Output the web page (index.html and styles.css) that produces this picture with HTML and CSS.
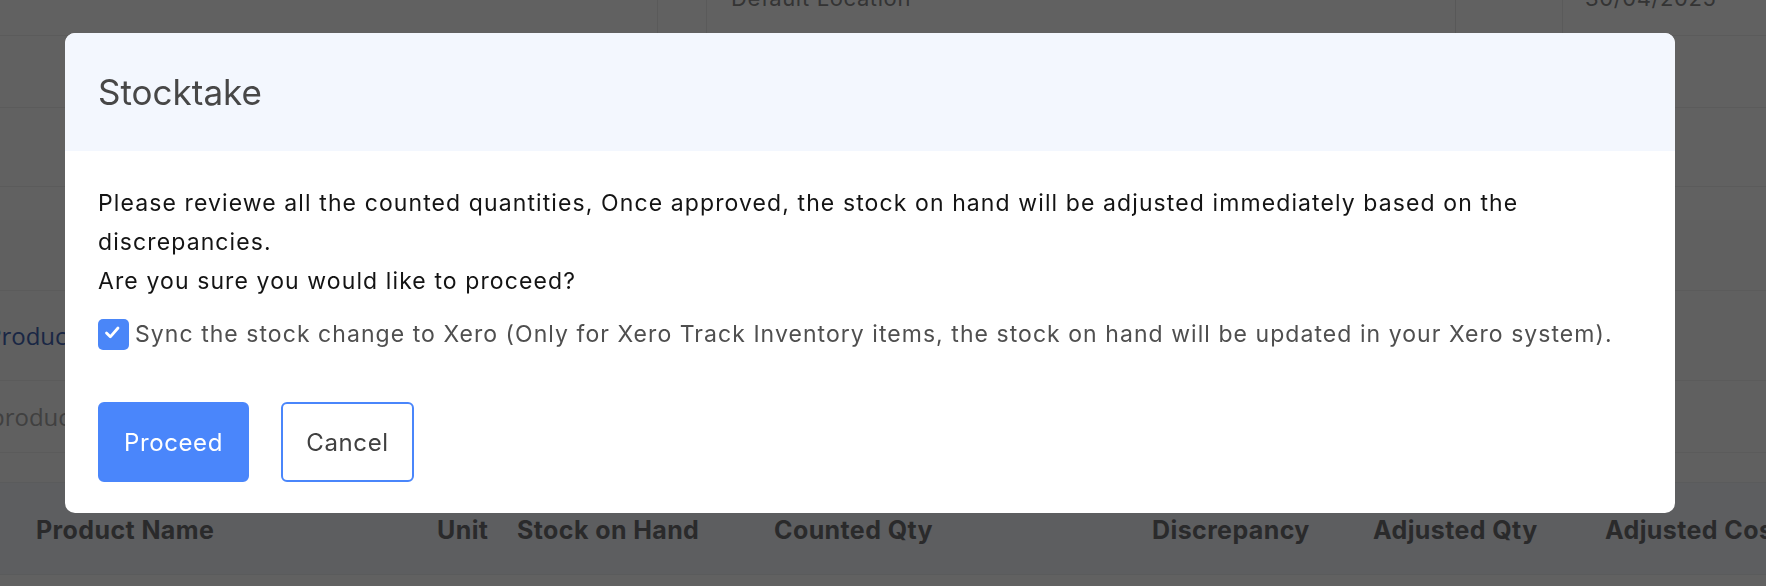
FILE: index.html
```html
<!DOCTYPE html>
<html lang="en">
<head>
<meta charset="utf-8">
<title>Stocktake</title>
<link rel="stylesheet" href="styles.css">
</head>
<body>
<div class="page">
  <div class="row row-top">
    <div class="cell c1"></div>
    <div class="cell c2"></div>
    <div class="cell c3"><span class="loc">Default Location</span></div>
    <div class="cell c4"></div>
    <div class="cell c5"></div>
    <div class="cell c6"><span class="date">30/04/2025</span></div>
  </div>
  <div class="row row-a"></div>
  <div class="row row-b"></div>
  <div class="row row-c"></div>
  <div class="section">
    <div class="row row-d"></div>
    <div class="row row-link"><span class="link">Products</span></div>
    <div class="row row-input"><span class="placeholder">products</span></div>
    <div class="row row-e"></div>
  </div>
  <div class="thead">
    <div class="th">Product Name</div>
    <div class="th">Unit</div>
    <div class="th">Stock on Hand</div>
    <div class="th">Counted Qty</div>
    <div class="th">Discrepancy</div>
    <div class="th">Adjusted Qty</div>
    <div class="th">Adjusted Cost</div>
  </div>
  <div class="row row-f"></div>
</div>

<div class="overlay">
  <div class="modal">
    <div class="modal-header">
      <h2 class="modal-title">Stocktake</h2>
    </div>
    <div class="modal-body">
      <p class="msg">Please reviewe all the counted quantities, Once approved, the stock on hand will be adjusted immediately based on the discrepancies.<br>Are you sure you would like to proceed?</p>
      <label class="sync">
        <span class="checkbox">
          <svg width="17" height="15" viewBox="0 0 17 15"><path d="M2.5 8 L6.3 11.8 L14 3" fill="none" stroke="#fff" stroke-width="2.8" stroke-linecap="round" stroke-linejoin="round"/></svg>
        </span>
        <span class="sync-text">Sync the stock change to Xero (Only for Xero Track Inventory items, the stock on hand will be updated in your Xero system).</span>
      </label>
      <div class="actions">
        <button class="btn btn-primary">Proceed</button>
        <button class="btn btn-outline">Cancel</button>
      </div>
    </div>
  </div>
</div>
</body>
</html>
```

FILE: styles.css
```css
* { box-sizing: border-box; }
html, body { margin: 0; padding: 0; }
body {
  width: 1766px;
  height: 586px;
  overflow: hidden;
  font-family: Inter, "Liberation Sans", Arial, sans-serif;
  background: #ffffff;
}

.page {
  display: flex;
  flex-direction: column;
  width: 1766px;
}
.row { border-bottom: 1px solid #f0f0f0; }
.row-top {
  height: 36px;
  display: flex;
  align-items: flex-end;
}
.cell { height: 100%; }
.c1 { width: 657px; }
.c2 { width: 49px; border-left: 1px solid #ececec; }
.c3 { width: 749px; border-left: 1px solid #ececec; padding-left: 24px; overflow: hidden; }
.c4 { width: 57px; border-left: 1px solid #e6e6e6; }
.c5 { width: 50px; }
.c6 { flex: 1; border-left: 1px solid #ececec; padding-left: 22px; overflow: hidden; }
.loc, .date {
  display: block;
  font-size: 22px;
  color: #8a8a8a;
  line-height: 22px;
  margin-top: -13px;
  letter-spacing: 0.6px;
}
.row-a { height: 72px; }
.row-b { height: 79px; }
.row-c { height: 33px; border-bottom: none; }
.section { background: #fcfcfc; display: flex; flex-direction: column; }
.row-d { height: 71px; }
.row-link {
  height: 90px;
  display: flex;
  align-items: center;
}
.link {
  margin-left: -13px;
  font-size: 24px;
  color: #4466b4;
  font-family: "Open Sans", Inter, sans-serif;
}
.row-input {
  height: 72px;
  display: flex;
  align-items: center;
}
.placeholder {
  margin-left: -10px;
  font-size: 24px;
  color: #a8a8a8;
  font-family: "Open Sans", Inter, sans-serif;
}
.row-e { height: 29px; border-bottom: none; }

.thead {
  height: 93px;
  background: #f3f6fc;
  border-top: 1px solid #eceef2;
  border-bottom: 1px solid #eceef2;
  display: grid;
  grid-template-columns: 401px 80px 257px 378px 221px 232px 1fr;
  padding-left: 36px;
  align-items: center;
}
.th {
  font-size: 25px;
  font-weight: 700;
  color: #6f7072;
  white-space: nowrap;
  overflow: hidden;
  letter-spacing: 0.4px;
  padding-top: 3px;
}
.row-f { height: 20px; }

.overlay {
  position: fixed;
  inset: 0;
  background: rgba(0, 0, 0, 0.62);
  padding: 33px 0 0 65px;
}

.modal {
  width: 1610px;
  background: #ffffff;
  border-radius: 10px;
  overflow: hidden;
}
.modal-header {
  height: 118px;
  background: #f3f7fe;
  display: flex;
  align-items: center;
  padding: 0 33px;
}
.modal-title {
  margin: 0;
  font-size: 35px;
  font-weight: 400;
  color: #474747;
}
.modal-body {
  padding: 33px 33px 31px;
}
.msg {
  margin: 0;
  font-size: 23px;
  line-height: 39px;
  color: #141414;
  letter-spacing: 1.1px;
}
.sync {
  display: flex;
  align-items: center;
  gap: 6px;
  margin-top: 18px;
}
.checkbox {
  width: 31px;
  height: 31px;
  border-radius: 5px;
  background: #4a86f8;
  display: flex;
  align-items: center;
  justify-content: center;
  padding: 0 3px 4px 0;
  flex: none;
}
.sync-text {
  font-size: 23px;
  line-height: 31px;
  color: #4f4f4f;
  letter-spacing: 1.05px;
  white-space: nowrap;
}
.actions {
  display: flex;
  gap: 32px;
  margin-top: 52px;
}
.btn {
  height: 80px;
  border-radius: 6px;
  font-family: Inter, "Liberation Sans", Arial, sans-serif;
  font-size: 24px;
  letter-spacing: 0.6px;
  padding: 0;
  border: 2px solid #4a86fb;
}
.btn-primary {
  background: #4a86fb;
  color: #ffffff;
  width: 151px;
}
.btn-outline {
  background: #ffffff;
  color: #404040;
  width: 133px;
}
```
